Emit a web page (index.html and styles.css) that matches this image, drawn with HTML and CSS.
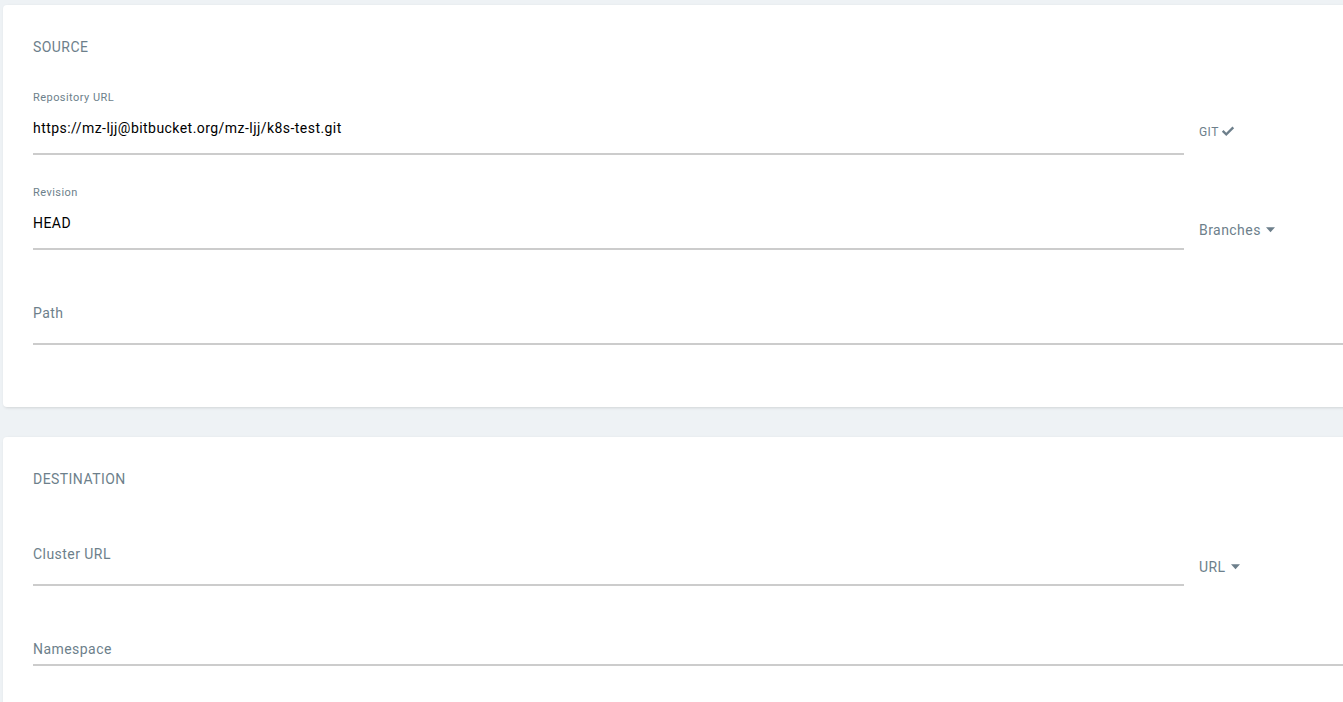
FILE: index.html
```html
<!DOCTYPE html>
<html>
<head>
<meta charset="utf-8">
<link rel="stylesheet" href="styles.css">
</head>
<body>
<div class="page">
  <section class="card">
    <div class="card-title">SOURCE</div>
    <div class="row">
      <div class="field field--main">
        <div class="field-label">Repository URL</div>
        <div class="field-input">https://mz-ljj@bitbucket.org/mz-ljj/k8s-test.git</div>
      </div>
      <div class="side side--git">GIT
        <svg class="check" viewBox="0 0 16 12" width="14" height="11"><path d="M1 6.2 L2.9 4.3 L6 7.4 L13.1 0.3 L15 2.2 L6 11.2 Z" fill="currentColor"/></svg>
      </div>
    </div>
    <div class="row row--spaced">
      <div class="field field--main">
        <div class="field-label">Revision</div>
        <div class="field-input">HEAD</div>
      </div>
      <div class="side side--lg">Branches
        <svg class="caret" viewBox="0 0 10 6" width="10" height="6"><path d="M0 0 H10 L5 5.5 Z" fill="currentColor"/></svg>
      </div>
    </div>
    <div class="row row--spaced">
      <div class="field field--full">
        <div class="field-label"></div>
        <div class="field-input field-input--empty">Path</div>
      </div>
    </div>
  </section>

  <section class="card card--second">
    <div class="card-title">DESTINATION</div>
    <div class="row row--dest">
      <div class="field field--main">
        <div class="field-label"></div>
        <div class="field-input field-input--empty">Cluster URL</div>
      </div>
      <div class="side side--lg side--url">URL
        <svg class="caret" viewBox="0 0 10 6" width="10" height="6"><path d="M0 0 H10 L5 5.5 Z" fill="currentColor"/></svg>
      </div>
    </div>
    <div class="row row--spaced">
      <div class="field field--full">
        <div class="field-label"></div>
        <div class="field-input field-input--empty field-input--tight">Namespace</div>
      </div>
    </div>
  </section>
</div>
</body>
</html>
```

FILE: styles.css
```css
html, body {
  margin: 0;
  padding: 0;
}
body {
  background: #eef2f5;
  font-family: Roboto, "Liberation Sans", Arial, sans-serif;
  letter-spacing: 0.45px;
  overflow: hidden;
  width: 1343px;
  height: 702px;
}
.page {
  padding: 5px 0 0 3px;
  display: flex;
  flex-direction: column;
  gap: 30px;
}
.card {
  width: 1420px;
  background: #fff;
  border-radius: 4px;
  box-shadow: 1px 1px 3px rgba(0, 0, 0, 0.12);
  padding: 32px 0 62px 30px;
  box-sizing: border-box;
}
.card--second {
  min-height: 400px;
}
.card-title {
  font-size: 14px;
  line-height: 20px;
  color: #6d7f8b;
}
.row {
  display: flex;
  align-items: stretch;
  margin-top: 33px;
}
.row--spaced {
  margin-top: 30px;
}
.row--dest {
  margin-top: 32px;
}
.field--main {
  width: 1151px;
  flex: none;
}
.field--full {
  width: 1390px;
  flex: none;
}
.field-label {
  font-size: 11px;
  line-height: 14px;
  height: 14px;
  padding-top: 1px;
  margin-bottom: -1px;
  color: #6d7f8b;
}
.field-input {
  font-size: 14px;
  line-height: 20px;
  color: #000;
  padding: 14px 0 15px 0;
  border-bottom: 2px solid #cccccc;
}
.field-input--empty {
  color: #6d7f8b;
  padding: 9px 0 20px 0;
}
.field-input--tight {
  padding-bottom: 5px;
}
.side {
  margin-left: 15px;
  display: flex;
  align-items: center;
  align-self: flex-end;
  color: #6d7f8b;
  font-size: 12px;
  line-height: 16px;
  padding-bottom: 15px;
}
.side--git .check {
  margin-left: 2px;
  margin-top: -1px;
}
.side--lg {
  font-size: 14px;
  line-height: 20px;
  padding-bottom: 10px;
}
.side--url {
  padding-bottom: 9px;
}
.caret {
  margin-left: 5px;
  width: 9px;
  height: 6px;
}
```
